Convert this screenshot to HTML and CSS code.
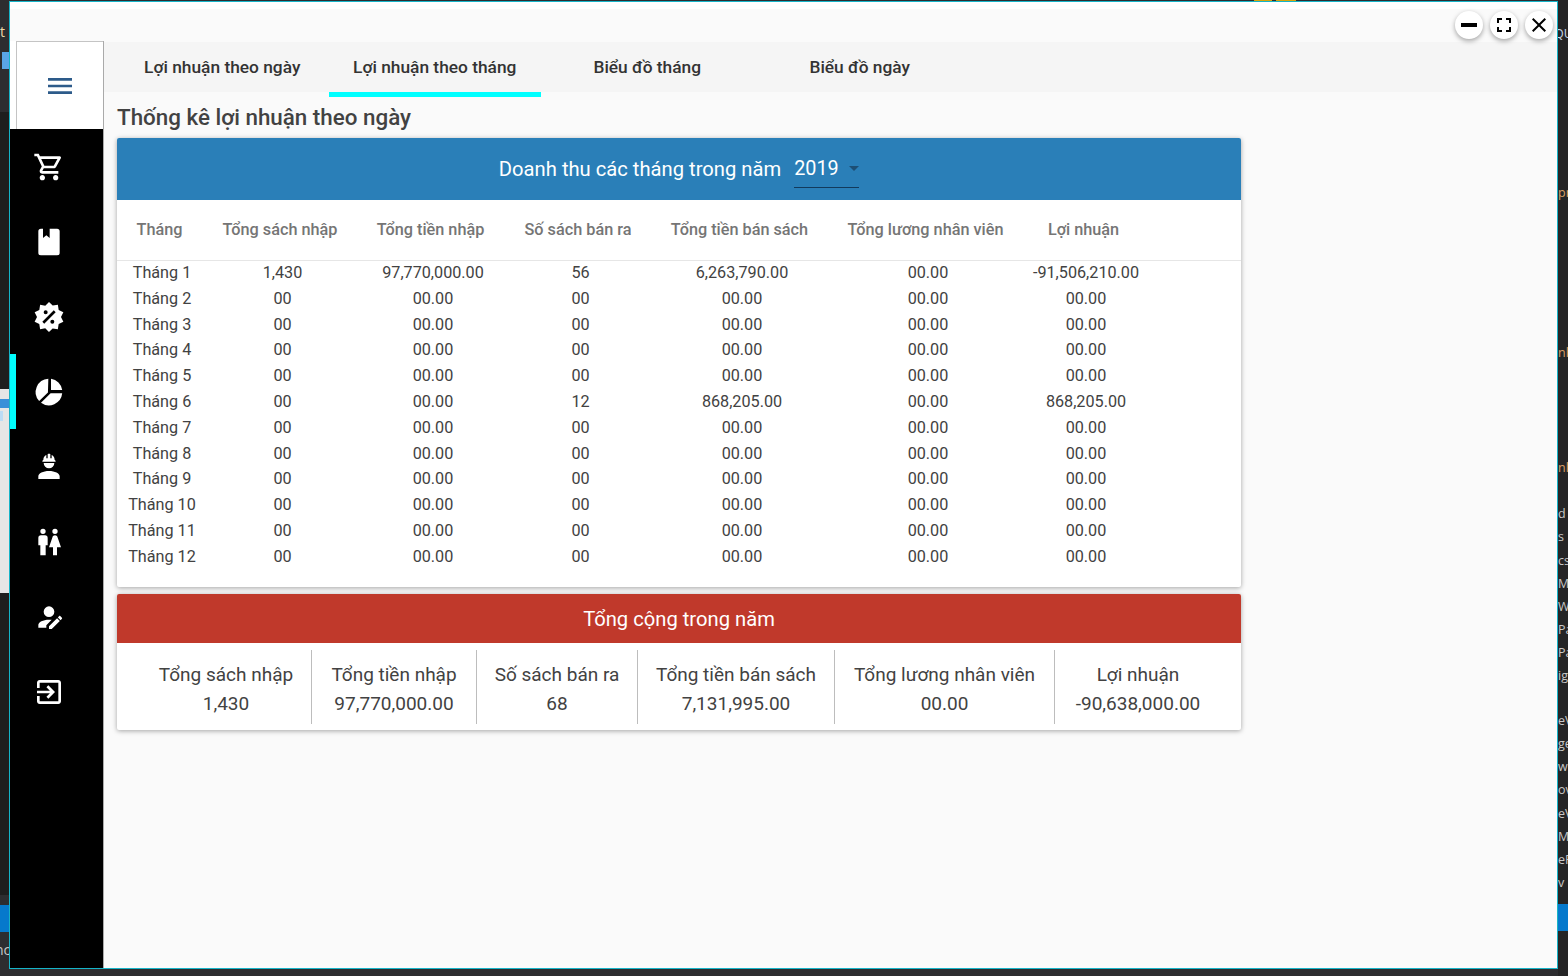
FILE: index.html
```html
<!DOCTYPE html>
<html>
<head>
  <title>Thống kê lợi nhuận</title>
  <link rel="stylesheet" href="styles.css">
</head>
<body>

  <!-- editor window behind the dialog, only its edges show -->
  <div class="desk-top"><i class="dt-mark"></i><i class="dt-mark wide"></i></div>

  <div class="desk-left">
    <div class="dl-top"><span class="dl-t">t</span><span class="dl-icon"></span></div>
    <div class="dl-dark"></div>
    <div class="dl-light"><div class="dl-blue"></div><div class="dl-pale"></div></div>
    <div class="dl-dark2"></div>
    <div class="dl-status"></div>
    <div class="dl-bottom">nc</div>
  </div>

  <div class="desk-right">
    <div class="dr-line dr-qu">QU</div>
    <div class="dr-line dr-pr orange">pr</div>
    <div class="dr-line dr-nl1 orange">nl</div>
    <div class="dr-line dr-nl2 orange">nl</div>
    <div class="dr-line dr-d">d</div>
    <div class="dr-line">s</div>
    <div class="dr-line">cs</div>
    <div class="dr-line">M.</div>
    <div class="dr-line">W</div>
    <div class="dr-line">Pa</div>
    <div class="dr-line">Pa</div>
    <div class="dr-line">ig</div>
    <div class="dr-line dr-ev">eV</div>
    <div class="dr-line">ge</div>
    <div class="dr-line">w</div>
    <div class="dr-line">ov</div>
    <div class="dr-line">eV</div>
    <div class="dr-line">M.c</div>
    <div class="dr-line">eP</div>
    <div class="dr-line">v</div>
    <div class="dr-blue"></div>
  </div>

  <div class="window">
    <div class="window-top"></div>

    <div class="win-controls">
      <button class="win-btn"><svg viewBox="0 0 24 24"><path d="M4 10h16v4H4z"/></svg></button>
      <button class="win-btn"><svg viewBox="0 0 24 24"><path d="M7 14H5v5h5v-2H7v-3zm-2-4h2V7h3V5H5v5zm12 7h-3v2h5v-5h-2v3zM14 5v2h3v3h2V5h-5z"/></svg></button>
      <button class="win-btn"><svg viewBox="0 0 24 24"><path d="M19 6.41L17.59 5 12 10.59 6.41 5 5 6.41 10.59 12 5 17.59 6.41 19 12 13.41 17.59 19 19 17.59 13.41 12z"/></svg></button>
    </div>

    <div class="window-body">
      <div class="sidebar">
        <div class="menu-wrap">
          <div class="menu-box">
            <svg viewBox="0 0 24 24"><path d="M3 18h18v-2H3v2zm0-5h18v-2H3v2zm0-7v2h18V6H3z"/></svg>
          </div>
        </div>
        <div class="nav-item"><svg viewBox="0 0 24 24"><path d="M15.55 13c.75 0 1.41-.41 1.75-1.03l3.58-6.49A.996.996 0 0020.01 4H5.21l-.94-2H1v2h2l3.6 7.59-1.35 2.44C4.52 15.37 5.48 17 7 17h12v-2H7l1.1-2h7.45zM6.16 6h12.15l-2.76 5H8.53L6.16 6zM7 18c-1.1 0-1.99.9-1.99 2S5.9 22 7 22s2-.9 2-2-.9-2-2-2zm10 0c-1.1 0-1.99.9-1.99 2s.89 2 1.99 2 2-.9 2-2-.9-2-2-2z"/></svg></div>
        <div class="nav-item"><svg viewBox="0 0 24 24"><path fill-rule="evenodd" d="M6 2h12a2 2 0 0 1 2 2v16a2 2 0 0 1-2 2H6a2 2 0 0 1-2-2V4a2 2 0 0 1 2-2zM7.5 2v7l2.5-2 2.5 2V2z"/></svg></div>
        <div class="nav-item"><svg viewBox="0 0 24 24"><path d="M18.65,2.85L19.26,6.71L22.77,8.5L21,12L22.78,15.5L19.24,17.29L18.63,21.15L14.74,20.54L11.97,23.3L9.19,20.5L5.33,21.14L4.71,17.25L1.22,15.47L3,11.97L1.23,8.5L4.74,6.69L5.35,2.86L9.22,3.5L12,0.69L14.77,3.46L18.65,2.85M9.5,7A1.5,1.5 0 0,0 8,8.5A1.5,1.5 0 0,0 9.5,10A1.5,1.5 0 0,0 11,8.5A1.5,1.5 0 0,0 9.5,7M14.5,14A1.5,1.5 0 0,0 13,15.5A1.5,1.5 0 0,0 14.5,17A1.5,1.5 0 0,0 16,15.5A1.5,1.5 0 0,0 14.5,14M8.41,17L17,8.41L15.59,7L7,15.59L8.41,17Z"/></svg></div>
        <div class="nav-item active"><svg viewBox="0 0 24 24"><path d="M13.5 2.1V10.5H21.9A10 10 0 0 0 13.5 2.1zM11.5 2A10 10 0 0 0 4.6 18.7L11.2 12.4zM6 20A10 10 0 0 0 21.9 13H13.2z"/></svg></div>
        <div class="nav-item"><svg viewBox="0 0 24 24"><path d="M12,15C7.58,15 4,16.79 4,19V21H20V19C20,16.79 16.42,15 12,15M8,9A4,4 0 0,0 12,13A4,4 0 0,0 16,9M11.5,2C11.2,2 11,2.21 11,2.5V5.5H10V3C10,3 7.75,3.86 7.75,6.75C7.75,6.75 7,6.89 7,8H17C16.95,6.89 16.25,6.75 16.25,6.75C16.25,3.86 14,3 14,3V5.5H13V2.5C13,2.21 12.81,2 12.5,2H11.5Z"/></svg></div>
        <div class="nav-item"><svg viewBox="0 0 24 24"><path d="M7.5,2A2,2 0 0,1 9.5,4A2,2 0 0,1 7.5,6A2,2 0 0,1 5.5,4A2,2 0 0,1 7.5,2M6,7H9A2,2 0 0,1 11,9V14.5H9.5V22H5.5V14.5H4V9A2,2 0 0,1 6,7M16.5,2A2,2 0 0,1 18.5,4A2,2 0 0,1 16.5,6A2,2 0 0,1 14.5,4A2,2 0 0,1 16.5,2M15,22V16H12L14.59,8.41C14.84,7.59 15.6,7 16.5,7C17.4,7 18.16,7.59 18.41,8.41L21,16H18V22H15Z"/></svg></div>
        <div class="nav-item"><svg viewBox="0 0 24 24"><path d="M21.7,13.35L20.7,14.35L18.65,12.3L19.65,11.3C19.86,11.09 20.21,11.09 20.42,11.3L21.7,12.58C21.91,12.79 21.91,13.14 21.7,13.35M12,18.94L18.06,12.88L20.11,14.93L14.06,21H12V18.94M12,14C7.58,14 4,15.79 4,18V20H10V18.11L14,14.11C13.34,14.03 12.67,14 12,14M12,4A4,4 0 0,0 8,8A4,4 0 0,0 12,12A4,4 0 0,0 16,8A4,4 0 0,0 12,4Z"/></svg></div>
        <div class="nav-item"><svg viewBox="0 0 24 24"><path d="M10.09 15.59L11.5 17l5-5-5-5-1.41 1.41L12.67 11H3v2h9.67l-2.58 2.59zM19 3H5c-1.11 0-2 .9-2 2v4h2V5h14v14H5v-4H3v4c0 1.1.89 2 2 2h14c1.1 0 2-.9 2-2V5c0-1.1-.9-2-2-2z"/></svg></div>
      </div>

      <div class="content">
        <div class="tabs">
          <div class="tab">Lợi nhuận theo ngày</div>
          <div class="tab active">Lợi nhuận theo tháng</div>
          <div class="tab">Biểu đồ tháng</div>
          <div class="tab">Biểu đồ ngày</div>
        </div>

        <h2 class="page-title">Thống kê lợi nhuận theo ngày</h2>

        <div class="card months">
          <div class="card-head blue">
            <span>Doanh thu các tháng trong năm</span>
            <div class="year-select">2019<i class="caret"></i></div>
          </div>
          <table class="month-table">
            <colgroup>
              <col class="c1"><col class="c2"><col class="c3"><col class="c4"><col class="c5"><col class="c6"><col class="c7"><col>
            </colgroup>
            <thead>
              <tr>
                <th>Tháng</th><th>Tổng sách nhập</th><th>Tổng tiền nhập</th><th>Số sách bán ra</th><th>Tổng tiền bán sách</th><th>Tổng lương nhân viên</th><th>Lợi nhuận</th><th></th>
              </tr>
            </thead>
            <tbody>
              <tr><td>Tháng 1</td><td>1,430</td><td>97,770,000.00</td><td>56</td><td>6,263,790.00</td><td>00.00</td><td>-91,506,210.00</td><td></td></tr>
              <tr><td>Tháng 2</td><td>00</td><td>00.00</td><td>00</td><td>00.00</td><td>00.00</td><td>00.00</td><td></td></tr>
              <tr><td>Tháng 3</td><td>00</td><td>00.00</td><td>00</td><td>00.00</td><td>00.00</td><td>00.00</td><td></td></tr>
              <tr><td>Tháng 4</td><td>00</td><td>00.00</td><td>00</td><td>00.00</td><td>00.00</td><td>00.00</td><td></td></tr>
              <tr><td>Tháng 5</td><td>00</td><td>00.00</td><td>00</td><td>00.00</td><td>00.00</td><td>00.00</td><td></td></tr>
              <tr><td>Tháng 6</td><td>00</td><td>00.00</td><td>12</td><td>868,205.00</td><td>00.00</td><td>868,205.00</td><td></td></tr>
              <tr><td>Tháng 7</td><td>00</td><td>00.00</td><td>00</td><td>00.00</td><td>00.00</td><td>00.00</td><td></td></tr>
              <tr><td>Tháng 8</td><td>00</td><td>00.00</td><td>00</td><td>00.00</td><td>00.00</td><td>00.00</td><td></td></tr>
              <tr><td>Tháng 9</td><td>00</td><td>00.00</td><td>00</td><td>00.00</td><td>00.00</td><td>00.00</td><td></td></tr>
              <tr><td>Tháng 10</td><td>00</td><td>00.00</td><td>00</td><td>00.00</td><td>00.00</td><td>00.00</td><td></td></tr>
              <tr><td>Tháng 11</td><td>00</td><td>00.00</td><td>00</td><td>00.00</td><td>00.00</td><td>00.00</td><td></td></tr>
              <tr><td>Tháng 12</td><td>00</td><td>00.00</td><td>00</td><td>00.00</td><td>00.00</td><td>00.00</td><td></td></tr>
            </tbody>
          </table>
        </div>

        <div class="card totals">
          <div class="card-head red">Tổng cộng trong năm</div>
          <div class="total-row">
            <div class="total-cell"><div>Tổng sách nhập</div><div>1,430</div></div>
            <div class="total-cell"><div>Tổng tiền nhập</div><div>97,770,000.00</div></div>
            <div class="total-cell"><div>Số sách bán ra</div><div>68</div></div>
            <div class="total-cell"><div>Tổng tiền bán sách</div><div>7,131,995.00</div></div>
            <div class="total-cell"><div>Tổng lương nhân viên</div><div>00.00</div></div>
            <div class="total-cell"><div>Lợi nhuận</div><div>-90,638,000.00</div></div>
          </div>
        </div>
      </div>
    </div>
  </div>

</body>
</html>
```

FILE: styles.css
```css
html, body {
  margin: 0;
  height: 100%;
}

body {
  width: 1568px;
  height: 976px;
  position: relative;
  overflow: hidden;
  background: #2d2d30;
  font-family: Roboto, sans-serif;
}

/* editor behind the dialog */
.desk-top {
  height: 1px;
  padding-left: 1254px;
  display: flex;
  gap: 4px;
}

.dt-mark {
  width: 18px;
  background: #d6a60c;
}

.dt-mark.wide {
  width: 20px;
}

.desk-left {
  position: absolute;
  left: 0;
  top: 0;
  width: 9px;
  height: 976px;
  display: flex;
  flex-direction: column;
  overflow: hidden;
}

.dl-top {
  height: 112px;
  background: #2d2d30;
  position: relative;
}

.dl-t {
  position: absolute;
  left: 0;
  top: 22px;
  font: 14px "Open Sans", sans-serif;
  color: #f0d9a8;
}

.dl-icon {
  position: absolute;
  left: 2px;
  top: 52px;
  width: 7px;
  height: 17px;
  background: #5aa5e6;
}

.dl-dark {
  height: 277px;
  background: #1e1e1e;
}

.dl-light {
  height: 204px;
  padding-top: 10px;
  box-sizing: border-box;
  background: #e6e6e6;
}

.dl-blue {
  height: 9px;
  background: #3a8fd8;
}

.dl-pale {
  width: 3px;
  height: 10px;
  margin-top: 3px;
  background: #bcdcf5;
}

.dl-dark2 {
  height: 302px;
  background: #1e1e1e;
}

.dl-status {
  height: 27px;
  margin-top: 10px;
  background: #0679cc;
}

.dl-bottom {
  font: 14px "Open Sans", sans-serif;
  color: #c8c8c8;
  margin-top: 8px;
  margin-left: -5px;
}

.desk-right {
  position: absolute;
  left: 1558px;
  top: 0;
  width: 10px;
  height: 976px;
  background: #252526;
  overflow: hidden;
  font: 12.5px/23.1px "Open Sans", sans-serif;
  color: #c8c8c8;
  white-space: nowrap;
}

.dr-line {
  height: 23.1px;
}

.orange {
  color: #d9a066;
}

.dr-qu {
  margin-top: 22px;
  margin-left: -4px;
  color: #c8d8e8;
}

.dr-pr {
  margin-top: 136px;
}

.dr-nl1 {
  margin-top: 137px;
}

.dr-nl2 {
  margin-top: 92px;
}

.dr-d {
  margin-top: 23px;
}

.dr-ev {
  margin-top: 22px;
}

.dr-blue {
  height: 27px;
  margin-top: 10px;
  background: #0679cc;
}

/* dialog */
.window {
  position: absolute;
  left: 9px;
  top: 1px;
  width: 1549px;
  height: 968px;
  box-sizing: border-box;
  border: 1px solid #16b4c8;
  background: #fafafa;
  display: flex;
  flex-direction: column;
}

.window-top {
  height: 39px;
  box-sizing: border-box;
  border-top: 7px solid #fff;
}

.win-controls {
  position: absolute;
  top: 9px;
  right: 4px;
  display: flex;
  gap: 7px;
  z-index: 2;
}

.win-btn {
  width: 28px;
  height: 28px;
  padding: 2px;
  border: 0;
  border-radius: 50%;
  background: #fff;
  box-shadow: 0 2px 5px rgba(0, 0, 0, .35);
}

.win-btn svg {
  display: block;
  width: 24px;
  height: 24px;
}

.window-body {
  flex: 1;
  display: flex;
  min-height: 0;
}

.sidebar {
  width: 94px;
  box-sizing: border-box;
  border-right: 1px solid #aaa;
  background: #000;
}

.menu-wrap {
  height: 88px;
  padding-left: 6px;
  box-sizing: border-box;
  background: #fff;
}

.menu-box {
  height: 88px;
  box-sizing: border-box;
  border-top: 1px solid #c4c4c4;
  border-left: 1px solid #c4c4c4;
  background: #fff;
  display: flex;
  align-items: center;
  justify-content: center;
}

.menu-box svg {
  width: 32px;
  height: 32px;
  fill: #2d5b8a;
}

.nav-item {
  height: 75px;
  padding-right: 21px;
  box-sizing: border-box;
  display: flex;
  align-items: center;
  justify-content: center;
  border-left: 6px solid transparent;
}

.nav-item.active {
  border-left-color: #00ffff;
}

.nav-item svg {
  width: 32px;
  height: 32px;
  fill: #fff;
}

.content {
  flex: 1;
  padding-top: 1px;
  min-width: 0;
}

.tabs {
  height: 50px;
  padding-left: 12px;
  background: #f5f5f5;
  display: flex;
}

.tab {
  width: 212.5px;
  height: 50px;
  flex: none;
  line-height: 50px;
  text-align: center;
  font-size: 17.33px;
  font-weight: 500;
  color: #333;
}

.tab.active {
  border-bottom: 5px solid #00ffff;
}

.page-title {
  margin: 11px 0 7px 13px;
  font-size: 22.4px;
  line-height: 28px;
  font-weight: 500;
  color: #424242;
}

.card {
  width: 1124px;
  margin-left: 13px;
  background: #fff;
  border-radius: 2px;
  box-shadow: 0 1px 5px rgba(0, 0, 0, .35);
  overflow: hidden;
}

.card-head {
  display: flex;
  align-items: center;
  justify-content: center;
  color: #fff;
  font-size: 20.2px;
}

.card-head.blue {
  height: 62px;
  background: #2a7fb8;
}

.card-head.red {
  height: 49px;
  box-sizing: border-box;
  padding-top: 2px;
  background: #c0392b;
}

.year-select {
  width: 65px;
  height: 38px;
  margin-left: 13px;
  box-sizing: border-box;
  border-bottom: 1px solid #123a5c;
  font-size: 19.8px;
  line-height: 38px;
  position: relative;
}

.caret {
  position: absolute;
  right: 0;
  top: 16px;
  border-left: 5px solid transparent;
  border-right: 5px solid transparent;
  border-top: 5px solid #1d4f74;
}

.month-table {
  width: 100%;
  table-layout: fixed;
  border-collapse: collapse;
  margin-bottom: 16px;
}

.c1 { width: 88px; }
.c2 { width: 155px; }
.c3 { width: 146px; }
.c4 { width: 149px; }
.c5 { width: 174px; }
.c6 { width: 198px; }
.c7 { width: 118px; }

.month-table th {
  height: 58px;
  padding: 0 5px 2px 0;
  border-bottom: 1px solid #e6e6e6;
  font-size: 16.25px;
  font-weight: 500;
  color: #757575;
  white-space: nowrap;
}

.month-table td {
  height: 23.82px;
  padding: 0 0 2px;
  text-align: center;
  font-size: 16.2px;
  line-height: 20px;
  color: #424242;
  white-space: nowrap;
}

.month-table tr > :first-child {
  padding-left: 2px;
}

.totals {
  margin-top: 7px;
}

.total-row {
  height: 87px;
  box-sizing: border-box;
  padding: 7px 0 6px 24px;
  display: grid;
  grid-template-columns: 171px 165px 161px 197px 220px 166px;
}

.total-cell {
  padding-top: 10px;
  text-align: center;
  font-size: 19px;
  line-height: 29px;
  color: #424242;
  border-right: 1px solid #bdbdbd;
  white-space: nowrap;
}

.total-cell:last-child {
  border-right: 0;
}
```
